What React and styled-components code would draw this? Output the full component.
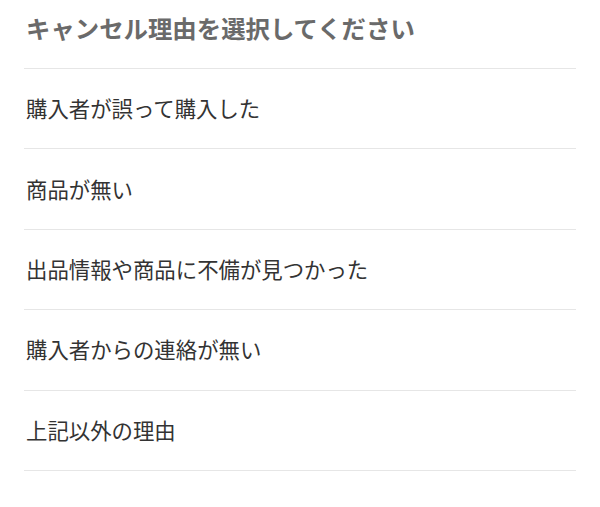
import React from 'react'
import styled, { createGlobalStyle } from 'styled-components'

const GlobalStyle = createGlobalStyle`
    body {
        margin: 0;
        background: #fff;
        font-family: "Noto Sans CJK JP", "Noto Sans", sans-serif;
    }
`
const Container = styled.div`
    padding: 0 24px;
`
const Header = styled.div`
    height: 68px;
    padding-left: 2px;
    border-bottom: 1px solid #e6e6e6;
    display: flex;
    align-items: center;
    box-sizing: content-box;
`
const Title = styled.h2`
    margin: 0 0 12px;
    font-size: 24.4px;
    line-height: 28px;
    font-weight: 700;
    color: #6a6a6a;
`
const List = styled.ul`
    margin: 0;
    padding: 0;
    list-style: none;
`
const Item = styled.li`
    height: 77.4px;
    padding: 0 0 2px 2px;
    box-sizing: content-box;
    border-bottom: 1px solid #e6e6e6;
    display: flex;
    align-items: center;
    font-size: 21.4px;
    color: #333;
`

const reasons = [
    '購入者が誤って購入した',
    '商品が無い',
    '出品情報や商品に不備が見つかった',
    '購入者からの連絡が無い',
    '上記以外の理由',
]

const App = () => {
    return (
        <Container>
            <GlobalStyle />
            <Header>
                <Title>キャンセル理由を選択してください</Title>
            </Header>
            <List>
                {reasons.map(r => (
                    <Item key={r}>{r}</Item>
                ))}
            </List>
        </Container>
    )
}

export default App
